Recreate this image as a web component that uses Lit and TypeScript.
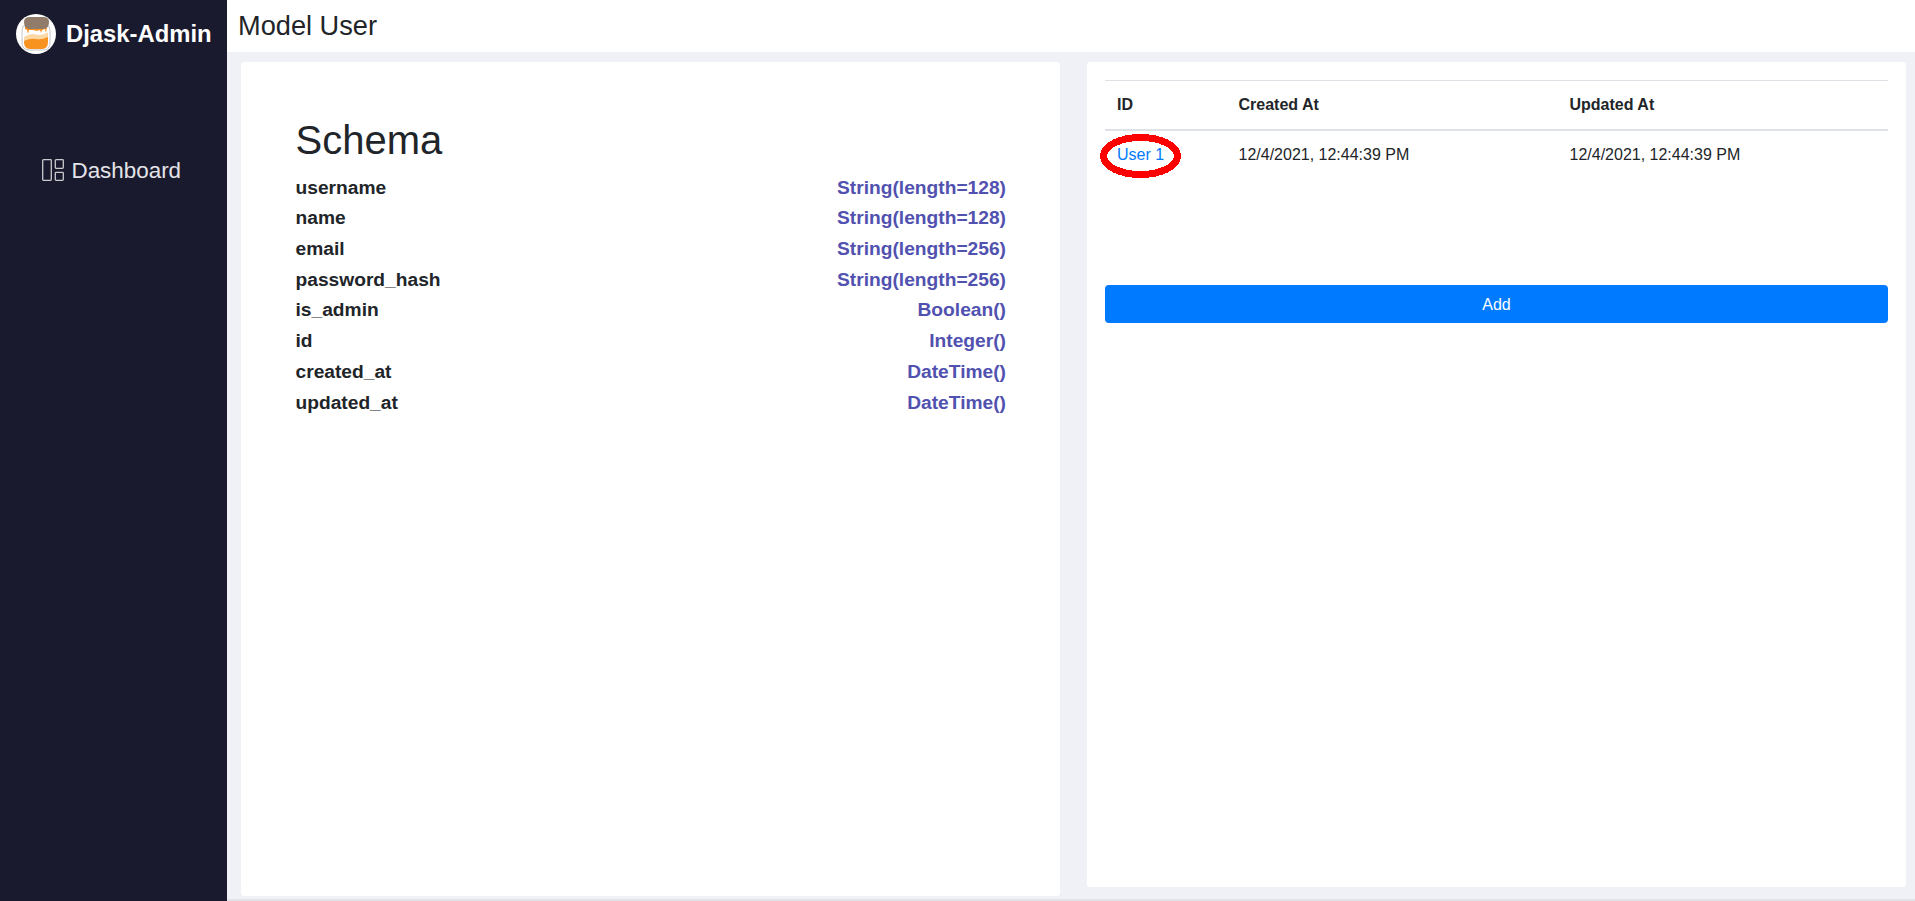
import { LitElement, html, css } from "lit";
import { customElement } from "lit/decorators.js";

const schema = [
  ["username", "String(length=128)"],
  ["name", "String(length=128)"],
  ["email", "String(length=256)"],
  ["password_hash", "String(length=256)"],
  ["is_admin", "Boolean()"],
  ["id", "Integer()"],
  ["created_at", "DateTime()"],
  ["updated_at", "DateTime()"],
];

@customElement("app-root")
export class AppRoot extends LitElement {
  static styles = css`
    :host {
      display: flex;
      width: 1915px;
      height: 901px;
      overflow: hidden;
      font-family: "Liberation Sans", Arial, sans-serif;
      color: #212529;
      background: #f0f1f6;
    }
    .sidebar {
      width: 227px;
      flex: none;
      background: #1a1a2e;
      color: #fff;
    }
    .brand {
      display: flex;
      align-items: center;
      gap: 10px;
      height: 67px;
      padding-left: 16px;
      font-size: 23.84px;
      font-weight: 700;
    }
    .brand svg {
      width: 40px;
      height: 40px;
      flex: none;
    }
    .nav {
      display: flex;
      align-items: center;
      gap: 8px;
      margin: 87px 0 0 41.5px;
      font-size: 22.4px;
      line-height: 34px;
      color: #e4e4e8;
    }
    .nav svg {
      width: 22px;
      height: 22px;
      flex: none;
      margin-bottom: 2px;
      color: #c9c9ce;
    }
    .main {
      flex: 1;
      min-width: 0;
      display: flex;
      flex-direction: column;
    }
    .topbar {
      height: 52px;
      flex: none;
      background: #fff;
      padding-left: 11px;
      font-size: 27.2px;
      line-height: 51px;
    }
    .content {
      flex: 1;
      display: grid;
      grid-template-columns: 819px 819px;
      column-gap: 27px;
      align-items: start;
      padding: 10px 9px 0 14px;
      border-bottom: 2px solid #e2e3e8;
    }
    .card {
      background: #fff;
      border-radius: 3px;
      box-sizing: border-box;
    }
    .schema {
      height: 834px;
      padding: 54px 54px 0 54.5px;
    }
    h1 {
      margin: 0 0 8.5px;
      font-size: 40px;
      font-weight: 400;
      line-height: 48px;
    }
    .row {
      display: flex;
      justify-content: space-between;
      font-size: 19.2px;
      font-weight: 700;
      line-height: 30.72px;
    }
    .row span:last-child {
      color: #5151b0;
    }
    .records {
      position: relative;
      height: 825px;
      padding: 18px;
    }
    table {
      width: 100%;
      border-collapse: collapse;
      font-size: 16px;
      table-layout: fixed;
    }
    th,
    td {
      text-align: left;
      padding: 12px;
      line-height: 24px;
      border-top: 1px solid #dee2e6;
    }
    th {
      border-bottom: 2px solid #dee2e6;
    }
    td {
      border-top: none;
    }
    a {
      color: #007bff;
      text-decoration: none;
    }
    .add {
      display: block;
      width: 100%;
      height: 38px;
      margin-top: 106px;
      padding: 1px 0 0;
      border: none;
      border-radius: 4px;
      background: #007bff;
      color: #fff;
      font: inherit;
      font-size: 16px;
    }
    .mark {
      position: absolute;
      left: 13px;
      top: 72px;
      width: 81px;
      height: 44px;
      pointer-events: none;
    }
  `;

  render() {
    return html`
      <aside class="sidebar">
        <div class="brand">
          <svg viewBox="0 0 40 40">
            <circle cx="20" cy="20" r="20" fill="#fff" />
            <path d="M7 12q-1 3-1 7v9q0 8 7 8h15q6 0 6-8v-9q0-4-1-7z" fill="#fff" stroke="#c4c4c4" stroke-width="1" />
            <path d="M8 23q6-4 12-2.500t12-2v9H8z" fill="#fcd9a4" />
            <path d="M8 27q6-3 12-2t12-2v5q0 7-6 7H14q-6 0-6-7z" fill="#f7931e" />
            <path d="M9 13h22l-1 6-1-4-3 1-1 3-1-3-3 1-4-1-4 0-1 4-1-4-2-1z" fill="#f7931e" />
            <path d="M8 8q0-5 6-5h13q6 0 6 5 0 7-6 7H14q-6 0-6-7z" fill="#917b6b" />
          </svg>
          Djask-Admin
        </div>
        <div class="nav">
          <svg viewBox="0 0 22 22" fill="none" stroke="currentColor" stroke-width="1.3">
            <rect x=".7" y=".7" width="8.600" height="20.600" rx=".8" />
            <rect x="13.300" y=".7" width="8" height="8.600" rx=".8" />
            <rect x="13.300" y="13.300" width="8" height="8" rx=".8" />
          </svg>
          Dashboard
        </div>
      </aside>
      <div class="main">
        <header class="topbar">Model User</header>
        <div class="content">
          <section class="card schema">
            <h1>Schema</h1>
            ${schema.map(
              ([name, type]) => html`<div class="row"><span>${name}</span><span>${type}</span></div>`
            )}
          </section>
          <section class="card records">
            <table>
              <colgroup>
                <col style="width: 121.5px" />
                <col style="width: 331px" />
                <col />
              </colgroup>
              <thead>
                <tr><th>ID</th><th>Created At</th><th>Updated At</th></tr>
              </thead>
              <tbody>
                <tr>
                  <td><a href="#">User 1</a></td>
                  <td>12/4/2021, 12:44:39 PM</td>
                  <td>12/4/2021, 12:44:39 PM</td>
                </tr>
              </tbody>
            </table>
            <button class="add">Add</button>
            <svg class="mark" viewBox="0 0 81 44" shape-rendering="crispEdges">
              <ellipse cx="40.500" cy="22" rx="37" ry="18.500" fill="none" stroke="#f00" stroke-width="7" />
            </svg>
          </section>
        </div>
      </div>
    `;
  }
}
